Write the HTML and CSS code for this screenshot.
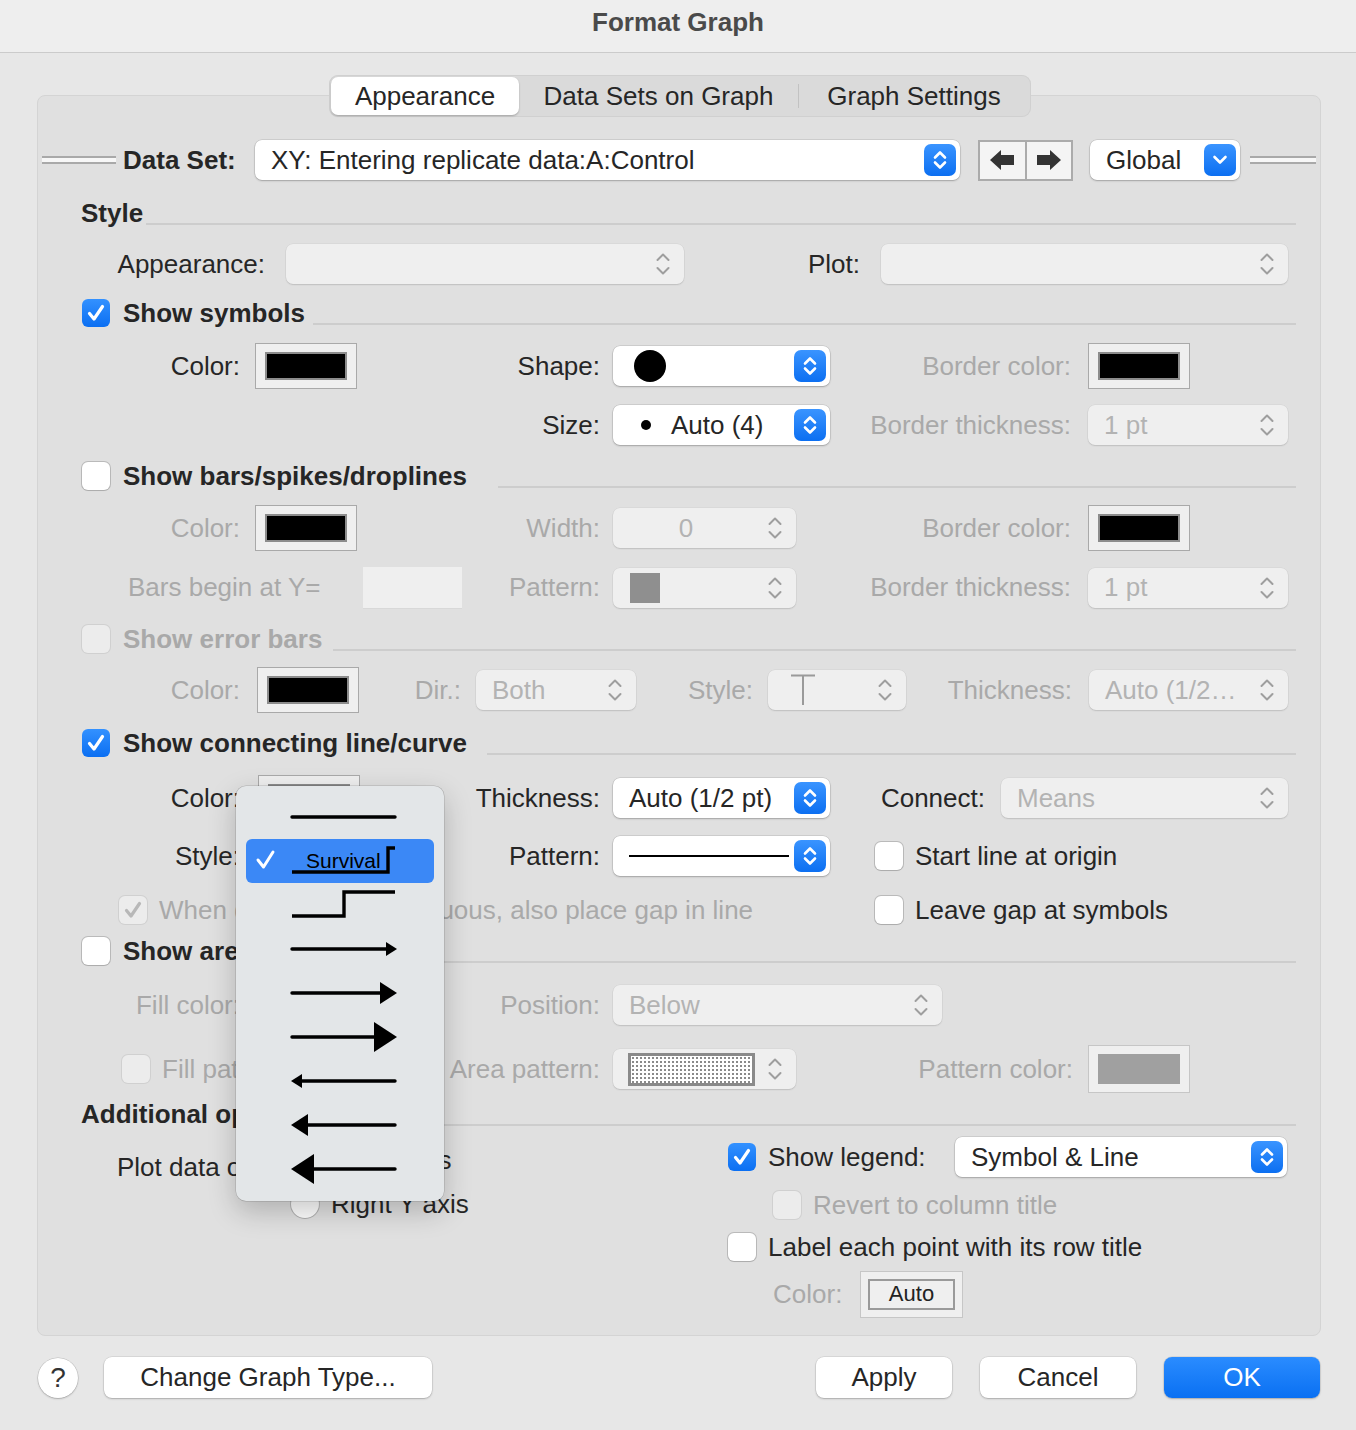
FILE: index.html
```html
<!DOCTYPE html>
<html lang="en">
<head>
    <meta charset="UTF-8">
    <meta name="viewport" content="width=device-width, initial-scale=1.0">
    <title>Format Graph</title>
    <link rel="stylesheet" href="styles.css">
</head>
<body>

    <!-- shared icons -->
    <svg class="defs" aria-hidden="true">
        <symbol id="ud" viewBox="0 0 32 32"><path d="M11 13.5 L16 8.5 L21 13.5 M11 18.5 L16 23.5 L21 18.5" fill="none" stroke="currentColor" stroke-width="2.6" stroke-linecap="round" stroke-linejoin="round"/></symbol>
        <symbol id="dn" viewBox="0 0 32 32"><path d="M10.5 13 L16 18.5 L21.5 13" fill="none" stroke="currentColor" stroke-width="2.6" stroke-linecap="round" stroke-linejoin="round"/></symbol>
        <symbol id="ud-g" viewBox="0 0 16 28"><path d="M2.5 10 L8 4.5 L13.5 10 M2.5 18 L8 23.5 L13.5 18" fill="none" stroke="currentColor" stroke-width="2" stroke-linecap="round" stroke-linejoin="round"/></symbol>
        <symbol id="tick" viewBox="0 0 28 28"><path d="M7.5 14.5 L12 20 L20.5 7.5" fill="none" stroke="currentColor" stroke-width="3.2" stroke-linecap="round" stroke-linejoin="round"/></symbol>
    </svg>

    <div class="titlebar">Format Graph</div>

    <div class="tabs-wrap">
        <div class="tabs">
            <div class="tab tab-on">Appearance</div>
            <div class="tab tab-mid">Data Sets on Graph</div>
            <i class="tab-sep"></i>
            <div class="tab tab-last">Graph Settings</div>
        </div>
    </div>

    <div class="panel">

        <!-- Data set picker -->
        <div class="dataset">
            <span class="etch"></span>
            <b class="ds-label">Data Set:</b>
            <div class="pop w705">XY: Entering replicate data:A:Control<span class="step"><svg><use href="#ud"/></svg></span></div>
            <div class="nav">
                <span><svg viewBox="0 0 24 20"><path d="M0 10 L11 0 V5 H24 V15 H11 V20 Z"/></svg></span>
                <span><svg viewBox="0 0 24 20"><path d="M24 10 L13 0 V5 H0 V15 H13 V20 Z"/></svg></span>
            </div>
            <div class="pop w150 global">Global<span class="step"><svg><use href="#dn"/></svg></span></div>
            <span class="etch etch-r"></span>
        </div>

        <!-- Style -->
        <div class="sect"><b>Style</b><i class="rule r3"></i></div>

        <div class="row g-app">
            <span class="lab">Appearance:</span>
            <div class="pop off w398"><svg class="ud"><use href="#ud-g"/></svg></div>
            <span class="lab">Plot:</span>
            <div class="pop off w407"><svg class="ud"><use href="#ud-g"/></svg></div>
        </div>

        <!-- Symbols -->
        <div class="sect">
            <span class="cb on"><svg><use href="#tick"/></svg></span><b>Show symbols</b><i class="rule"></i>
        </div>

        <div class="row tall g-a">
            <span class="lab">Color:</span>
            <div class="pair pr13"><span class="sw"><i></i></span><span class="lbl">Shape:</span></div>
            <div class="pair pr17">
                <div class="pop w217"><i class="dot-big"></i><span class="step"><svg><use href="#ud"/></svg></span></div>
                <span class="lbl dim">Border color:</span>
            </div>
            <span class="sw"><i></i></span>
        </div>

        <div class="row g-a">
            <span></span>
            <div class="pair pr13"><span class="lbl">Size:</span></div>
            <div class="pair pr17">
                <div class="pop w217"><i class="dot-sm"></i>Auto (4)<span class="step"><svg><use href="#ud"/></svg></span></div>
                <span class="lbl dim">Border thickness:</span>
            </div>
            <div class="pop off w200">1 pt<svg class="ud"><use href="#ud-g"/></svg></div>
        </div>

        <!-- Bars -->
        <div class="sect">
            <span class="cb"></span><b>Show bars/spikes/droplines</b><i class="rule r31"></i>
        </div>

        <div class="row tall g-a">
            <span class="lab dim">Color:</span>
            <div class="pair pr13"><span class="sw"><i></i></span><span class="lbl dim">Width:</span></div>
            <div class="pair pr17">
                <div class="pop off w183"><span class="mid">0</span><svg class="ud"><use href="#ud-g"/></svg></div>
                <span class="lbl dim">Border color:</span>
            </div>
            <span class="sw"><i></i></span>
        </div>

        <div class="row g-a">
            <div class="pair pr13 span2">
                <span class="dim begin">Bars begin at Y=</span>
                <span class="field"></span>
                <span class="lbl dim">Pattern:</span>
            </div>
            <div class="pair pr17">
                <div class="pop off w183"><i class="pat-sq"></i><svg class="ud"><use href="#ud-g"/></svg></div>
                <span class="lbl dim">Border thickness:</span>
            </div>
            <div class="pop off w200">1 pt<svg class="ud"><use href="#ud-g"/></svg></div>
        </div>

        <!-- Error bars -->
        <div class="sect">
            <span class="cb dis"></span><b class="dim">Show error bars</b><i class="rule r11"></i>
        </div>

        <div class="row tall g-err">
            <span class="lab dim">Color:</span>
            <div class="pair pr15"><span class="sw ml2"><i></i></span><span class="lbl dim">Dir.:</span></div>
            <div class="pair pr15">
                <div class="pop off w160">Both<svg class="ud"><use href="#ud-g"/></svg></div>
                <span class="lbl dim">Style:</span>
            </div>
            <div class="pair pr17">
                <div class="pop off w138"><svg class="tee" viewBox="0 0 26 32"><path d="M1 1.5 H25 M13 1.5 V31"/></svg><svg class="ud"><use href="#ud-g"/></svg></div>
                <span class="lbl dim">Thickness:</span>
            </div>
            <div class="pop off w199">Auto (1/2…<svg class="ud"><use href="#ud-g"/></svg></div>
        </div>

        <!-- Connecting line -->
        <div class="sect">
            <span class="cb on"><svg><use href="#tick"/></svg></span><b>Show connecting line/curve</b><i class="rule r20"></i>
        </div>

        <div class="row g-conn">
            <span class="lab">Color:</span>
            <div class="pair pr13"><span class="sw ml3"><i></i></span><span class="lbl">Thickness:</span></div>
            <div class="pair pr16">
                <div class="pop w217">Auto (1/2 pt)<span class="step"><svg><use href="#ud"/></svg></span></div>
                <span class="lbl">Connect:</span>
            </div>
            <div class="pop off w287">Means<svg class="ud"><use href="#ud-g"/></svg></div>
        </div>

        <div class="row g-style">
            <span class="lab">Style:</span>
            <div class="pair pr13">
                <div class="pop w175"><span class="step"><svg><use href="#ud"/></svg></span></div>
                <span class="lbl">Pattern:</span>
            </div>
            <div class="pair">
                <div class="pop w217"><i class="pat-line"></i><span class="step"><svg><use href="#ud"/></svg></span></div>
                <div class="opt ml45"><span class="cb"></span><span>Start line at origin</span></div>
            </div>
        </div>

        <div class="row g-when">
            <div class="opt pl81"><span class="cb dis"><svg><use href="#tick"/></svg></span><span class="dim">When data are discontinuous, also place gap in line</span></div>
            <div class="opt"><span class="cb"></span><span>Leave gap at symbols</span></div>
        </div>

        <!-- Area fill -->
        <div class="sect">
            <span class="cb"></span><b>Show area fill</b><i class="rule"></i>
        </div>

        <div class="row g-a">
            <span class="lab dim">Fill color:</span>
            <div class="pair pr13"><span class="sw"><i></i></span><span class="lbl dim">Position:</span></div>
            <div class="pop off w329">Below<svg class="ud"><use href="#ud-g"/></svg></div>
        </div>

        <div class="row tall g-a">
            <div class="pair pr13 span2">
                <div class="opt ml84"><span class="cb dis"></span><span class="dim">Fill pattern:</span></div>
                <span class="lbl dim">Area pattern:</span>
            </div>
            <div class="pair pr15">
                <div class="pop off w183"><i class="dots"></i><svg class="ud"><use href="#ud-g"/></svg></div>
                <span class="lbl dim">Pattern color:</span>
            </div>
            <span class="sw grey"><i></i></span>
        </div>

        <!-- Additional options -->
        <div class="sect"><b>Additional options</b><i class="rule"></i></div>

        <div class="extra">
            <div class="plot-on">
                <span class="plot-lab">Plot data on:</span>
                <div class="radios">
                    <div class="opt"><span class="rd"></span><span>Left Y axis</span></div>
                    <div class="opt"><span class="rd"></span><span>Right Y axis</span></div>
                </div>
            </div>
            <div class="legend">
                <div class="opt">
                    <span class="cb on"><svg><use href="#tick"/></svg></span><span class="legend-lab">Show legend:</span>
                    <div class="pop w332 ml13">Symbol &amp; Line<span class="step"><svg><use href="#ud"/></svg></span></div>
                </div>
                <div class="opt sub mt8"><span class="cb dis"></span><span class="dim">Revert to column title</span></div>
                <div class="opt mt2"><span class="cb"></span><span>Label each point with its row title</span></div>
                <div class="opt sub mt3 tall-opt">
                    <span class="dim color-lab">Color:</span>
                    <span class="sw auto"><span>Auto</span></span>
                </div>
            </div>
        </div>
    </div>

    <!-- Dialog buttons -->
    <div class="footer">
        <div class="help">?</div>
        <div class="btn btn-change">Change Graph Type...</div>
        <div class="btn btn-apply">Apply</div>
        <div class="btn btn-cancel">Cancel</div>
        <div class="btn btn-ok">OK</div>
    </div>

    <!-- open line style menu -->
    <div class="menu">
        <div class="mi"><svg viewBox="0 0 188 44"><path d="M46 22 H149"/></svg></div>
        <div class="mi sel"><svg viewBox="0 0 188 44">
            <path class="ck" d="M12 21 L17.5 28 L27 13"/>
            <text x="60" y="29">Survival</text>
            <path class="sq" d="M46 33 H142 V9 H149"/>
        </svg></div>
        <div class="mi"><svg viewBox="0 0 188 44"><path class="sq" d="M46 33 H98 V9 H149"/></svg></div>
        <div class="mi"><svg viewBox="0 0 188 44"><path d="M46 22 H142"/><path class="head" d="M140 15 L151 22 L140 29 Z"/></svg></div>
        <div class="mi"><svg viewBox="0 0 188 44"><path d="M46 22 H138"/><path class="head" d="M134 11 L151 22 L134 33 Z"/></svg></div>
        <div class="mi"><svg viewBox="0 0 188 44"><path d="M46 22 H132"/><path class="head" d="M128 7 L151 22 L128 37 Z"/></svg></div>
        <div class="mi"><svg viewBox="0 0 188 44"><path d="M53 22 H149"/><path class="head" d="M56 15 L45 22 L56 29 Z"/></svg></div>
        <div class="mi"><svg viewBox="0 0 188 44"><path d="M58 22 H149"/><path class="head" d="M62 11 L45 22 L62 33 Z"/></svg></div>
        <div class="mi"><svg viewBox="0 0 188 44"><path d="M64 22 H149"/><path class="head" d="M68 7 L45 22 L68 37 Z"/></svg></div>
    </div>

</body>
</html>
```

FILE: styles.css
```css
* { box-sizing: border-box; }

body {
    margin: 0;
    width: 1356px;
    height: 1430px;
    position: relative;
    overflow: hidden;
    background: #e7e7e7;
    font-family: "Liberation Sans", Arial, sans-serif;
    font-size: 26px;
    color: #262626;
}

.defs { position: absolute; width: 0; height: 0; }

.dim { color: #a9a9a9; }

/* Title bar */
.titlebar {
    height: 53px;
    padding-bottom: 7px;
    display: flex;
    align-items: center;
    justify-content: center;
    background: #eeeeee;
    border-bottom: 1px solid #cbcbcb;
    font-weight: bold;
    color: #4a4a4a;
}

/* Segmented tabs */
.tabs-wrap {
    position: relative;
    z-index: 2;
    display: flex;
    justify-content: center;
    margin-top: 22px;
    padding-left: 4px;
}
.tabs {
    display: flex;
    align-items: center;
    height: 42px;
    padding: 2px;
    background: #dadada;
    border-radius: 9px;
    box-shadow: inset 0 0 0 1px #d0d0d0;
}
.tab {
    display: flex;
    align-items: center;
    justify-content: center;
    height: 38px;
}
.tab-on {
    width: 188px;
    background: #fff;
    border-radius: 7px;
    box-shadow: 0 1px 2px rgba(0, 0, 0, .25);
}
.tab-mid { width: 279px; }
.tab-sep { width: 1px; height: 24px; background: #c2c2c2; }
.tab-last { width: 230px; }

/* Main group box */
.panel {
    height: 1241px;
    margin: -22px 35px 0 37px;
    display: grid;
    /* each track = gap above + row height, rows sit at the bottom */
    grid-template-rows: 84px 53px 51px 49px 57px 55px 51px 56px 55px 52px 55px 49px 52px 61px 54px 41px 51px 71px 41px auto;
    align-items: end;
    background: #e0e0e0;
    border: 1px solid #d4d4d4;
    border-radius: 8px;
}

/* Data set row */
.dataset {
    display: flex;
    align-items: center;
    height: 40px;
    padding-left: 4px;
}
.etch {
    width: 74px;
    height: 8px;
    border-top: 2px solid #a9a9a9;
    border-bottom: 2px solid #a9a9a9;
    background: #f7f7f7;
}
.etch-r { width: 66px; margin-left: 10px; }
.ds-label { width: 117px; margin: 0 15px 0 7px; }
.nav {
    display: flex;
    width: 95px;
    height: 41px;
    margin-left: 18px;
    border: 2px solid #ababab;
    background: #f4f4f4;
}
.nav span {
    flex: 1;
    display: flex;
    align-items: center;
    justify-content: center;
}
.nav span + span { border-left: 2px solid #ababab; }
.nav svg { width: 24px; height: 20px; fill: #333; }
.global { margin-left: 17px; }

/* Section headings */
.sect {
    display: flex;
    align-items: center;
    height: 40px;
    padding: 0 24px 0 43px;
    font-weight: bold;
}
.sect .cb { margin: 0 13px 0 1px; }
.rule {
    flex: 1;
    align-self: flex-end;
    height: 2px;
    margin: 0 0 8px 8px;
    background: #cdcdcd;
}
.rule.r3 { margin-left: 3px; }
.rule.r11 { margin-left: 11px; }
.rule.r20 { margin-left: 20px; }
.rule.r31 { margin-left: 31px; }

/* Field rows */
.row {
    display: grid;
    height: 40px;
    align-items: center;
}
.row.tall { height: 48px; }
.g-app { grid-template-columns: 248px 398px 197px 407px; }
.g-a { grid-template-columns: 217px 358px 475px 208px; }
.g-err { grid-template-columns: 217px 221px 292px 321px 199px; }
.g-conn { grid-template-columns: 217px 358px 388px 295px; }
.g-style { grid-template-columns: 217px 358px 683px; }
.g-when { grid-template-columns: 837px 1fr; }

.lab { text-align: right; padding-right: 15px; white-space: nowrap; }
.g-app .lab { padding-right: 21px; }

.pair { display: flex; align-items: center; white-space: nowrap; }
.pair > .lbl:last-child { margin-left: auto; }
.span2 { grid-column: span 2; }

.pr13 { padding-right: 13px; }
.pr15 { padding-right: 15px; }
.pr16 { padding-right: 16px; }
.pr17 { padding-right: 17px; }
.ml2 { margin-left: 2px; }
.ml3 { margin-left: 3px; }
.ml13 { margin-left: 13px; }
.ml45 { margin-left: 45px; }
.ml84 { margin-left: 84px; }
.pl81 { padding-left: 81px; }
.mt2 { margin-top: 2px; }
.mt3 { margin-top: 3px; }
.mt8 { margin-top: 8px; }

.begin { width: 198px; margin-left: 90px; }
.field {
    width: 99px;
    height: 41px;
    margin-left: 37px;
    background: #efefef;
    box-shadow: 0 1px 0 #d8d8d8;
}

/* Colour swatches */
.sw {
    display: block;
    flex: none;
    width: 102px;
    height: 46px;
    padding: 8px 9px;
    background: #efefef;
    border: 1px solid #a9a9a9;
}
.sw i {
    display: block;
    height: 100%;
    background: #000;
    border: 2px solid #8c8c8c;
}
.sw.grey { height: 48px; border-color: #c6c6c6; }
.sw.grey i { background: #a0a0a0; border: none; }
.sw.auto { width: 103px; height: 47px; padding: 7px; border-color: #c6c6c6; margin-left: 15px; }
.sw.auto span {
    display: flex;
    align-items: center;
    justify-content: center;
    height: 100%;
    background: #efefef;
    border: 2px solid #9a9a9a;
    font-size: 22px;
    color: #222;
}

/* Pop-up buttons */
.pop {
    display: flex;
    align-items: center;
    flex: none;
    height: 40px;
    padding-left: 16px;
    background: #fff;
    border-radius: 7px;
    box-shadow: 0 0 0 .5px rgba(0, 0, 0, .15), 0 1px 2px rgba(0, 0, 0, .22);
    white-space: nowrap;
    overflow: hidden;
}
.pop .step {
    flex: none;
    margin-left: auto;
    margin-right: 4px;
    width: 32px;
    height: 32px;
    border-radius: 7px;
    background: linear-gradient(#3a94ff, #0c6ff1);
    color: #fff;
}
.step svg { display: block; width: 32px; height: 32px; }
.pop.off {
    background: #efefef;
    color: #b3b3b3;
    box-shadow: 0 0 0 .5px rgba(0, 0, 0, .06), 0 1px 1.5px rgba(0, 0, 0, .12);
}
.pop .ud {
    flex: none;
    margin-left: auto;
    margin-right: 13px;
    width: 16px;
    height: 28px;
    color: #9e9e9e;
}
.pop .mid { flex: 1; text-align: center; padding-right: 24px; }

.w138 { width: 138px; }
.w150 { width: 150px; }
.w160 { width: 160px; }
.w175 { width: 175px; }
.w183 { width: 183px; }
.w199 { width: 199px; }
.w200 { width: 200px; }
.w217 { width: 217px; }
.w287 { width: 287px; }
.w329 { width: 329px; }
.w332 { width: 332px; }
.w398 { width: 398px; }
.w407 { width: 407px; }
.w705 { width: 705px; }

.dot-big { width: 32px; height: 32px; margin-left: 5px; border-radius: 50%; background: #000; }
.dot-sm { width: 10px; height: 10px; margin: 0 20px 0 12px; border-radius: 50%; background: #000; }
.pat-sq { width: 30px; height: 30px; margin-left: 1px; background: #8f8f8f; }
.pat-line { width: 160px; height: 2px; background: #000; }
.tee { width: 26px; height: 32px; margin-left: 6px; fill: none; stroke: #9a9a9a; stroke-width: 2; }
.dots {
    width: 127px;
    height: 33px;
    margin-left: -1px;
    border: 3px solid #8a8a8a;
    background-color: #fff;
    background-image: radial-gradient(circle, #8a8a8a 0.9px, transparent 1.3px);
    background-size: 4px 4px;
}

/* Checkboxes and radios */
.opt { display: flex; align-items: center; gap: 12px; height: 40px; white-space: nowrap; }
.cb {
    display: flex;
    flex: none;
    width: 28px;
    height: 28px;
    border-radius: 6px;
    background: #fff;
    box-shadow: 0 0 0 1px rgba(0, 0, 0, .17), 0 1px 1px rgba(0, 0, 0, .08);
}
.cb svg { width: 28px; height: 28px; }
.cb.on { background: linear-gradient(#3391ff, #0b6ff2); color: #fff; box-shadow: none; }
.cb.dis { background: #ececec; color: #b8b8b8; box-shadow: 0 0 0 1px rgba(0, 0, 0, .07); }
.rd {
    flex: none;
    width: 28px;
    height: 28px;
    border-radius: 50%;
    background: #fff;
    box-shadow: 0 0 0 1px rgba(0, 0, 0, .17), 0 1px 1px rgba(0, 0, 0, .08);
}

/* Additional options block */
.extra {
    display: grid;
    grid-template-columns: 690px 1fr;
    align-self: start;
    margin-top: 3px;
}
.plot-on { display: flex; align-items: flex-start; }
.plot-lab {
    width: 253px;
    height: 40px;
    line-height: 40px;
    margin-top: 10px;
    padding-left: 79px;
    white-space: nowrap;
}
.radios { display: flex; flex-direction: column; gap: 4px; margin-top: 3px; }
.legend { display: flex; flex-direction: column; }
.legend .sub { padding-left: 45px; }
.legend .tall-opt { height: 48px; gap: 0; }
.legend-lab { width: 162px; }
.color-lab { width: 72px; }

/* Bottom buttons */
.footer {
    display: flex;
    align-items: center;
    height: 41px;
    margin-top: 21px;
    padding: 0 36px 0 38px;
}
.help {
    display: flex;
    align-items: center;
    justify-content: center;
    width: 40px;
    height: 40px;
    border-radius: 50%;
    background: #fff;
    box-shadow: 0 0 0 .5px rgba(0, 0, 0, .18), 0 1px 2px rgba(0, 0, 0, .2);
    font-size: 28px;
    color: #333;
}
.btn {
    display: flex;
    align-items: center;
    justify-content: center;
    height: 41px;
    background: #fff;
    border-radius: 8px;
    box-shadow: 0 0 0 .5px rgba(0, 0, 0, .12), 0 1px 2px rgba(0, 0, 0, .22);
}
.btn-change { width: 328px; margin-left: 26px; margin-right: auto; }
.btn-apply { width: 136px; }
.btn-cancel { width: 156px; margin-left: 28px; }
.btn-ok {
    width: 156px;
    margin-left: 28px;
    background: linear-gradient(#2a8cff, #0a70f2);
    color: #fff;
}

/* Line style menu (open) */
.menu {
    position: absolute;
    left: 236px;
    top: 786px;
    z-index: 5;
    width: 208px;
    height: 415px;
    padding: 9px 0 10px;
    background: #e3e6e8;
    border-radius: 10px;
    box-shadow: 0 0 0 .5px rgba(0, 0, 0, .2), 0 10px 28px rgba(0, 0, 0, .22);
}
.mi { height: 44px; margin: 0 10px; border-radius: 6px; }
.mi.sel { background: #3b88f6; }
.mi svg { display: block; width: 188px; height: 44px; }
.mi path { fill: none; stroke: #000; stroke-width: 3.4; stroke-linecap: round; }
.mi .sq { stroke-linecap: butt; stroke-linejoin: miter; }
.mi .head { fill: #000; stroke: none; }
.mi .ck { stroke: #fff; stroke-width: 3; stroke-linejoin: round; }
.mi text { font-family: "Liberation Sans", Arial, sans-serif; font-size: 21px; fill: #000; }
```
